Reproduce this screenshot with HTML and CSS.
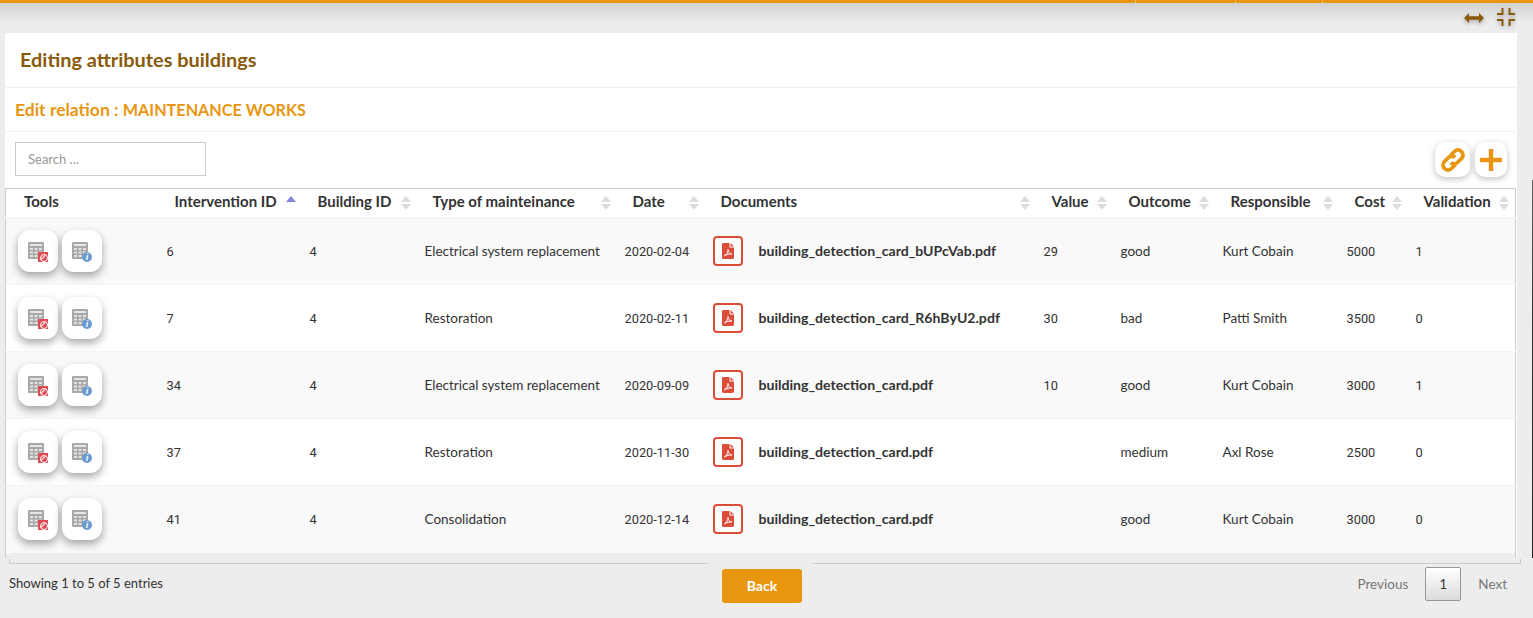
FILE: index.html
```html
<!DOCTYPE html>
<html>
  <head>
    <title>Editing attributes buildings</title>
    <link rel="stylesheet" href="styles.css">
  </head>

  <body>
    <svg class="sprites" width="0" height="0">
      <symbol id="grid" viewBox="0 0 16 17">
        <rect width="16" height="17" rx="1" fill="#a8a8a8"/>
        <rect x="2" y="2" width="12" height="2" fill="#e6e6e6"/>
        <path d="M2 6h3v2H2zM6.500 6h3v2h-3zM11 6h3v2h-3zM2 9.500h3v2H2zM6.500 9.500h3v2h-3zM11 9.500h3v2h-3zM2 13h3v2H2zM6.500 13h3v2h-3zM11 13h3v2h-3z" fill="#e2e2e2"/>
      </symbol>
      <symbol id="pdf" viewBox="0 0 12 16">
        <path d="M1.200 0H7.500V4.500H12V14.600C12 15.400 11.400 16 10.600 16H1.200C.5 16 0 15.400 0 14.600V1.400C0 .6.500 0 1.200 0ZM8.500 0 12 3.500H8.500Z" fill="#dd4b39"/>
        <path d="M2.500 12.800C4.500 11.800 6 9 6 6.500 6.500 9.500 7.800 10.800 9.800 11 7.500 10.800 4.500 11.500 2.500 12.800Z" fill="none" stroke="#fff" stroke-width="1"/>
      </symbol>
    </svg>

    <div class="top-bar">
      <span class="top-seg seg-main"></span>
      <span class="top-seg seg-a"></span>
      <span class="top-seg seg-b"></span>
    </div>
    <div class="screen-tools">
      <svg class="tool-icon arrow-icon" width="20" height="10" viewBox="0 0 20 10"><path d="M0 5 5 0V3.300H15V0L20 5 15 10V6.700H5V10Z" fill="#8a5a0a"/></svg>
      <svg class="tool-icon" width="18" height="18" viewBox="0 0 18 18"><path d="M4.500 0H6.500V7H0V5H4.500ZM11.500 0H13.500V5H18V7H11.500ZM0 11H6.500V18H4.500V13H0ZM11.500 11H18V13H13.500V18H11.500Z" fill="#8a5a0a"/></svg>
    </div>

    <div class="panel">
      <h1 class="panel-title">Editing attributes buildings</h1>
      <h2 class="relation-title">Edit relation : <span class="relation-name">MAINTENANCE WORKS</span></h2>
      <div class="toolbar">
        <input class="search" type="text" placeholder="Search ...">
        <div class="toolbar-actions">
          <button class="action-btn" type="button" title="Link">
            <svg width="28" height="28" viewBox="0 0 28 28" fill="none" stroke="#e8960f" stroke-width="3.800">
              <path d="M11.500 9.500 15.500 5.500C17.500 3.500 20.500 3.500 22.500 5.500 24.500 7.500 24.500 10.500 22.500 12.500L18.500 16.500C16.500 18.500 13.500 18.500 12 16.500"/>
              <path d="M16.500 18.500 12.500 22.500C10.500 24.500 7.500 24.500 5.500 22.500 3.500 20.500 3.500 17.500 5.500 15.500L9.500 11.500C11.500 9.500 14.500 9.500 16 11.500"/>
            </svg>
          </button>
          <button class="action-btn narrow" type="button" title="Add">
            <svg width="22" height="22" viewBox="0 0 22 22"><path d="M8.800 0H13.200V8.800H22V13.200H13.200V22H8.800V13.200H0V8.800H8.800Z" fill="#e8960f"/></svg>
          </button>
        </div>
      </div>

      <table class="data-table">
        <thead>
          <tr>
            <th class="col-tools no-sort">Tools</th>
            <th class="col-id sort-asc">Intervention ID</th>
            <th class="col-building">Building ID</th>
            <th class="col-type">Type of mainteinance</th>
            <th class="col-date">Date</th>
            <th class="col-docs">Documents</th>
            <th class="col-value">Value</th>
            <th class="col-outcome">Outcome</th>
            <th class="col-resp">Responsible</th>
            <th class="col-cost">Cost</th>
            <th class="col-valid">Validation</th>
          </tr>
        </thead>
        <tbody>
          <tr>
            <td><div class="row-tools">
              <button class="row-btn" type="button"><svg width="16" height="17"><use href="#grid"/></svg><i class="badge badge-ban"></i></button>
              <button class="row-btn" type="button"><svg width="16" height="17"><use href="#grid"/></svg><i class="badge badge-info">i</i></button>
            </div></td>
            <td class="num">6</td><td class="num">4</td><td>Electrical system replacement</td><td class="num">2020-02-04</td>
            <td><div class="doc"><span class="doc-icon"><svg width="12" height="16"><use href="#pdf"/></svg></span><b>building_detection_card_bUPcVab.pdf</b></div></td>
            <td class="num">29</td><td>good</td><td>Kurt Cobain</td><td class="num">5000</td><td class="num">1</td>
          </tr>
          <tr>
            <td><div class="row-tools">
              <button class="row-btn" type="button"><svg width="16" height="17"><use href="#grid"/></svg><i class="badge badge-ban"></i></button>
              <button class="row-btn" type="button"><svg width="16" height="17"><use href="#grid"/></svg><i class="badge badge-info">i</i></button>
            </div></td>
            <td class="num">7</td><td class="num">4</td><td>Restoration</td><td class="num">2020-02-11</td>
            <td><div class="doc"><span class="doc-icon"><svg width="12" height="16"><use href="#pdf"/></svg></span><b>building_detection_card_R6hByU2.pdf</b></div></td>
            <td class="num">30</td><td>bad</td><td>Patti Smith</td><td class="num">3500</td><td class="num">0</td>
          </tr>
          <tr>
            <td><div class="row-tools">
              <button class="row-btn" type="button"><svg width="16" height="17"><use href="#grid"/></svg><i class="badge badge-ban"></i></button>
              <button class="row-btn" type="button"><svg width="16" height="17"><use href="#grid"/></svg><i class="badge badge-info">i</i></button>
            </div></td>
            <td class="num">34</td><td class="num">4</td><td>Electrical system replacement</td><td class="num">2020-09-09</td>
            <td><div class="doc"><span class="doc-icon"><svg width="12" height="16"><use href="#pdf"/></svg></span><b>building_detection_card.pdf</b></div></td>
            <td class="num">10</td><td>good</td><td>Kurt Cobain</td><td class="num">3000</td><td class="num">1</td>
          </tr>
          <tr>
            <td><div class="row-tools">
              <button class="row-btn" type="button"><svg width="16" height="17"><use href="#grid"/></svg><i class="badge badge-ban"></i></button>
              <button class="row-btn" type="button"><svg width="16" height="17"><use href="#grid"/></svg><i class="badge badge-info">i</i></button>
            </div></td>
            <td class="num">37</td><td class="num">4</td><td>Restoration</td><td class="num">2020-11-30</td>
            <td><div class="doc"><span class="doc-icon"><svg width="12" height="16"><use href="#pdf"/></svg></span><b>building_detection_card.pdf</b></div></td>
            <td></td><td>medium</td><td>Axl Rose</td><td class="num">2500</td><td class="num">0</td>
          </tr>
          <tr>
            <td><div class="row-tools">
              <button class="row-btn" type="button"><svg width="16" height="17"><use href="#grid"/></svg><i class="badge badge-ban"></i></button>
              <button class="row-btn" type="button"><svg width="16" height="17"><use href="#grid"/></svg><i class="badge badge-info">i</i></button>
            </div></td>
            <td class="num">41</td><td class="num">4</td><td>Consolidation</td><td class="num">2020-12-14</td>
            <td><div class="doc"><span class="doc-icon"><svg width="12" height="16"><use href="#pdf"/></svg></span><b>building_detection_card.pdf</b></div></td>
            <td></td><td>good</td><td>Kurt Cobain</td><td class="num">3000</td><td class="num">0</td>
          </tr>
        </tbody>
      </table>
      <div class="table-end"></div>
    </div>

    <div class="footer">
      <div class="entries">Showing 1 to 5 of 5 entries</div>
      <div class="footer-center"><button class="back-btn" type="button">Back</button></div>
      <div class="pagination">
        <span class="page-link">Previous</span>
        <span class="page-current">1</span>
        <span class="page-link">Next</span>
      </div>
    </div>

    <div class="edge-strip"></div>
  </body>
</html>
```

FILE: styles.css
```css
* {
  box-sizing: border-box;
}

html, body {
  height: 618px;
  overflow: hidden;
}

body {
  margin: 0;
  background-color: #ededed;
  color: #333;
  font-family: 'Lato', 'Noto Sans', sans-serif;
  font-size: 13.500px;
}

.sprites {
  position: absolute;
}

.top-bar {
  height: 3px;
  display: flex;
  background: #e8960f;
}

.top-seg {
  border-right: 1px solid #f3c070;
}

.seg-main { width: 1136px; }
.seg-a { width: 100px; }
.seg-b { width: 87px; }

.screen-tools {
  height: 30px;
  padding: 5px 18px 0 0;
  display: flex;
  justify-content: flex-end;
  align-items: flex-start;
  gap: 13px;
  background: linear-gradient(to bottom, #d2d2d2, #ededed 20px);
}

.tool-icon {
  filter: drop-shadow(0 2px 2px rgba(0, 0, 0, 0.3));
}

.arrow-icon {
  margin-top: 5px;
}

.panel {
  width: 1512px;
  margin-left: 5px;
  background: #fff;
}

.panel-title {
  height: 55px;
  margin: 0;
  padding: 14px 15px 0;
  border-bottom: 1px solid #f0f0f0;
  color: #8a5a0a;
  font-size: 19.900px;
  font-weight: 700;
}

.relation-title {
  height: 44px;
  margin: 0;
  padding: 11px 10px 0;
  border-bottom: 1px solid #f0f0f0;
  color: #e8960f;
  font-size: 17.500px;
  font-weight: 700;
}

.relation-name {
  font-size: 16.200px;
}

.toolbar {
  height: 56px;
  padding: 10px 10px 0;
  display: flex;
  justify-content: space-between;
  align-items: flex-start;
}

.search {
  width: 191px;
  height: 34px;
  padding: 0 12px;
  border: 1px solid #ccc;
  font-family: inherit;
  font-size: 13px;
  outline: none;
}

.search::placeholder {
  color: #999;
}

.toolbar-actions {
  display: flex;
  gap: 5px;
}

.action-btn {
  width: 35px;
  height: 35px;
  padding: 0;
  display: flex;
  align-items: center;
  justify-content: center;
  background: #fff;
  border: none;
  border-radius: 10px;
  box-shadow: 0 2px 6px rgba(0, 0, 0, 0.25);
}

.action-btn.narrow {
  width: 32px;
}

.data-table {
  width: 1511px;
  table-layout: fixed;
  border-collapse: collapse;
  border: 1px solid #ccc;
  border-bottom: none;
}

.data-table th {
  position: relative;
  height: 29px;
  padding: 0 0 4px 16px;
  text-align: left;
  font-size: 15px;
  font-weight: 700;
  background: #fff;
  border-bottom: 2px solid #f4f4f4;
  white-space: nowrap;
}

.data-table th::before,
.data-table th::after {
  content: '';
  position: absolute;
  right: 6px;
  border-left: 5px solid transparent;
  border-right: 5px solid transparent;
}

.data-table th::before {
  top: 7px;
  border-bottom: 6px solid #ddd;
}

.data-table th::after {
  top: 15px;
  border-top: 6px solid #ddd;
}

.data-table th.no-sort::before,
.data-table th.no-sort::after,
.data-table th.sort-asc::after {
  display: none;
}

.data-table th.sort-asc::before {
  border-bottom-color: #8484d8;
}

.col-tools { width: 153px; padding-left: 18px !important; }
.col-id { width: 143px; }
.col-building { width: 115px; }
.col-type { width: 200px; }
.col-date { width: 88px; }
.col-docs { width: 331px; }
.col-value { width: 77px; }
.col-outcome { width: 102px; }
.col-resp { width: 124px; }
.col-cost { width: 69px; }

.data-table td {
  height: 67px;
  padding: 0 0 0 8px;
  border-top: 1px solid #f4f4f4;
  white-space: nowrap;
}

.data-table td.num {
  font-family: 'Roboto', sans-serif;
  font-size: 12.800px;
}

.data-table tbody tr:nth-child(odd) td {
  background: #f9f9f9;
}

.data-table tbody td:first-child {
  padding-left: 12px;
}

.table-end {
  height: 5px;
  background: #ededed;
  border-left: 1px solid #ccc;
  border-right: 1px solid #ccc;
  width: 1511px;
}

.row-tools {
  display: flex;
  gap: 4px;
}

.row-btn {
  position: relative;
  width: 40px;
  height: 42px;
  padding: 12px 0 0 10px;
  display: flex;
  align-items: flex-start;
  justify-content: flex-start;
  background: #fff;
  border: none;
  border-radius: 12px;
  box-shadow: 0 4px 8px rgba(0, 0, 0, 0.35);
}

.badge {
  position: absolute;
  left: 20px;
  top: 22px;
  width: 10px;
  height: 10px;
}

.badge-ban {
  background: #dd4b55;
}

.badge-ban::before {
  content: '';
  position: absolute;
  left: 2px;
  top: 2px;
  width: 6px;
  height: 6px;
  border: 1.500px solid #fff;
  border-radius: 50%;
}

.badge-ban::after {
  content: '';
  position: absolute;
  left: 2px;
  top: 4.500px;
  width: 6px;
  height: 1px;
  background: #fff;
  transform: rotate(-45deg);
}

.badge-info {
  border-radius: 50%;
  background: #6a9ad0;
  color: #fff;
  font-size: 9px;
  font-weight: 700;
  line-height: 10px;
  text-align: center;
}

.doc {
  display: flex;
  align-items: center;
  gap: 16px;
}

.doc-icon {
  width: 30px;
  height: 30px;
  display: flex;
  align-items: center;
  justify-content: center;
  border: 2px solid #dd4b39;
  border-radius: 4px;
  background: #fff;
}

.doc b {
  position: relative;
  top: -1px;
  font-size: 14.100px;
}

.footer {
  display: grid;
  grid-template-columns: 699px 105px 708px;
  width: 1512px;
  margin: 5px 0 0 9px;
  font-size: 13px;
}

.entries {
  position: relative;
  height: 55px;
  padding-top: 11px;
  border-top: 1px solid #ccc;
}

.entries::before {
  content: '';
  position: absolute;
  left: 0;
  top: -5px;
  height: 5px;
  border-left: 1px solid #ccc;
}

.footer-center {
  padding: 6px 0 0 14px;
}

.back-btn {
  width: 80px;
  height: 34px;
  background: #e8960f;
  color: #fff;
  border: none;
  border-radius: 3px;
  font-family: inherit;
  font-size: 14px;
  font-weight: 700;
}

.pagination {
  position: relative;
  height: 55px;
  padding: 3px 14px 0 0;
  border-top: 1px solid #ccc;
  display: flex;
  justify-content: flex-end;
  align-items: flex-start;
  gap: 17px;
}

.pagination::before {
  content: '';
  position: absolute;
  right: 0;
  top: -5px;
  height: 5px;
  border-left: 1px solid #ccc;
}

.page-link {
  line-height: 34px;
  font-size: 13.500px;
  color: #777;
}

.page-current {
  width: 36px;
  height: 34px;
  line-height: 32px;
  text-align: center;
  border: 1px solid #979797;
  border-radius: 2px;
  background: linear-gradient(to bottom, #fff, #dcdcdc);
}

.edge-strip {
  position: absolute;
  right: 0;
  top: 180px;
  width: 1px;
  height: 378px;
  background: linear-gradient(to bottom, #666, #333 35%, #222);
}
```
